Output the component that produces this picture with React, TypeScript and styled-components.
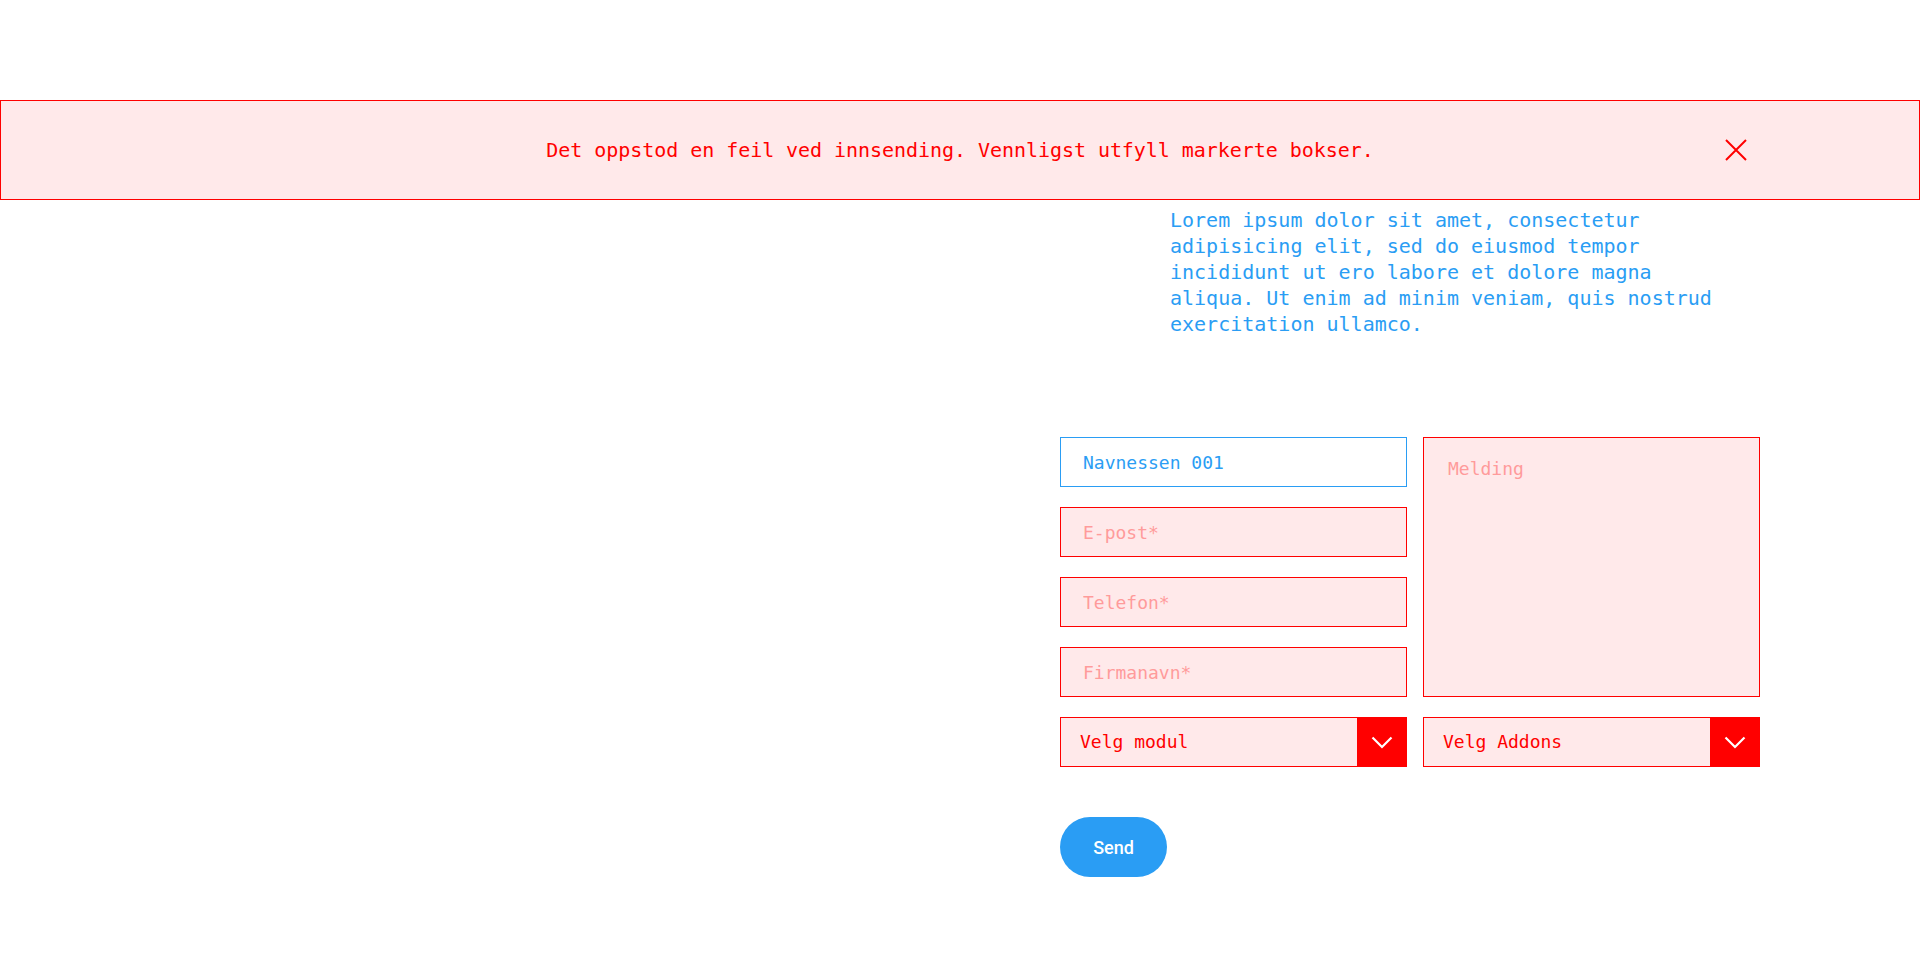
import styled, { createGlobalStyle } from "styled-components";

const red = "#ff0000";
const pink = "#ffe9ea";
const blue = "#2a9df4";
const mono = `"DejaVu Sans Mono", "Liberation Mono", monospace`;

const GlobalStyle = createGlobalStyle`
  html, body {
    margin: 0;
    padding: 0;
    background: #fff;
  }
  body {
    font-family: ${mono};
  }
  * {
    box-sizing: border-box;
  }
`;

const Page = styled.div`
  padding-top: 100px;
  min-height: 978px;
`;

const ErrorBanner = styled.div`
  height: 100px;
  display: grid;
  grid-template-columns: 1fr auto 1fr;
  align-items: center;
  background: ${pink};
  border: 1px solid ${red};
  color: ${red};
  font-size: 20px;
  letter-spacing: -0.05px;
`;

const BannerText = styled.span`
  grid-column: 2;
`;

const CloseButton = styled.button`
  grid-column: 3;
  justify-self: end;
  margin-right: 171px;
  width: 24px;
  height: 24px;
  padding: 0;
  border: 0;
  background: none;
  cursor: pointer;
  display: flex;
  align-items: center;
  justify-content: center;
`;

const Main = styled.div`
  display: grid;
  grid-template-columns: 960px 960px;
`;

const RightColumn = styled.div`
  grid-column: 2;
  padding-left: 100px;
`;

const Intro = styled.p`
  margin: 7px 0 0 110px;
  width: 560px;
  font-size: 20px;
  line-height: 26px;
  color: ${blue};
`;

const Form = styled.form`
  margin-top: 100px;
  display: grid;
  grid-template-columns: 347px 337px;
  grid-auto-rows: 50px;
  column-gap: 16px;
  row-gap: 20px;
`;

const Input = styled.input<{ $error?: boolean }>`
  grid-column: 1;
  height: 50px;
  padding: 0 22px;
  font-family: ${mono};
  font-size: 18px;
  border: 1px solid ${(p) => (p.$error ? red : blue)};
  background: ${(p) => (p.$error ? pink : "#fff")};
  color: ${blue};
  outline: none;
  border-radius: 0;
  &::placeholder {
    color: #ff9b9b;
  }
`;

const Message = styled.textarea`
  grid-column: 2;
  grid-row: 1 / span 4;
  resize: none;
  padding: 20px 24px;
  font-family: ${mono};
  font-size: 18px;
  border: 1px solid ${red};
  background: ${pink};
  outline: none;
  border-radius: 0;
  &::placeholder {
    color: #ff9b9b;
  }
`;

const Select = styled.div`
  display: flex;
  align-items: stretch;
  border: 1px solid ${red};
  background: ${pink};
  color: ${red};
  font-size: 18px;
  cursor: pointer;
`;

const SelectLabel = styled.span`
  flex: 1;
  display: flex;
  align-items: center;
  padding: 0 0 2px 19px;
`;

const Arrow = styled.span`
  width: 49px;
  background: ${red};
  display: flex;
  align-items: center;
  justify-content: center;
`;

const SendButton = styled.button`
  margin-top: 50px;
  width: 107px;
  height: 60px;
  border: 0;
  border-radius: 30px;
  background: ${blue};
  color: #fff;
  font-family: Roboto, "Noto Sans", sans-serif;
  font-weight: 500;
  font-size: 18px;
  cursor: pointer;
`;

const Chevron = () => (
  <svg width="22" height="13" viewBox="0 0 22 13">
    <polyline points="1.5,1.5 11,11 20.5,1.5" fill="none" stroke="#fff" strokeWidth="2.2" />
  </svg>
);

export default function App() {
  return (
    <Page>
      <GlobalStyle />
      <ErrorBanner>
        <BannerText>
          Det oppstod en feil ved innsending. Vennligst utfyll markerte bokser.
        </BannerText>
        <CloseButton type="button" aria-label="Lukk">
          <svg width="22" height="22" viewBox="0 0 22 22">
            <path d="M1 1 L21 21 M21 1 L1 21" stroke={red} strokeWidth="2" />
          </svg>
        </CloseButton>
      </ErrorBanner>
      <Main>
        <RightColumn>
          <Intro>
            Lorem ipsum dolor sit amet, consectetur adipisicing elit, sed do
            eiusmod tempor incididunt ut ero labore et dolore magna aliqua. Ut
            enim ad minim veniam, quis nostrud exercitation ullamco.
          </Intro>
          <Form onSubmit={(e) => e.preventDefault()}>
            <Input defaultValue="Navnessen 001" />
            <Message placeholder="Melding" />
            <Input $error placeholder="E-post*" />
            <Input $error placeholder="Telefon*" />
            <Input $error placeholder="Firmanavn*" />
            <Select>
              <SelectLabel>Velg modul</SelectLabel>
              <Arrow>
                <Chevron />
              </Arrow>
            </Select>
            <Select>
              <SelectLabel>Velg Addons</SelectLabel>
              <Arrow>
                <Chevron />
              </Arrow>
            </Select>
          </Form>
          <SendButton type="button">Send</SendButton>
        </RightColumn>
      </Main>
    </Page>
  );
}
